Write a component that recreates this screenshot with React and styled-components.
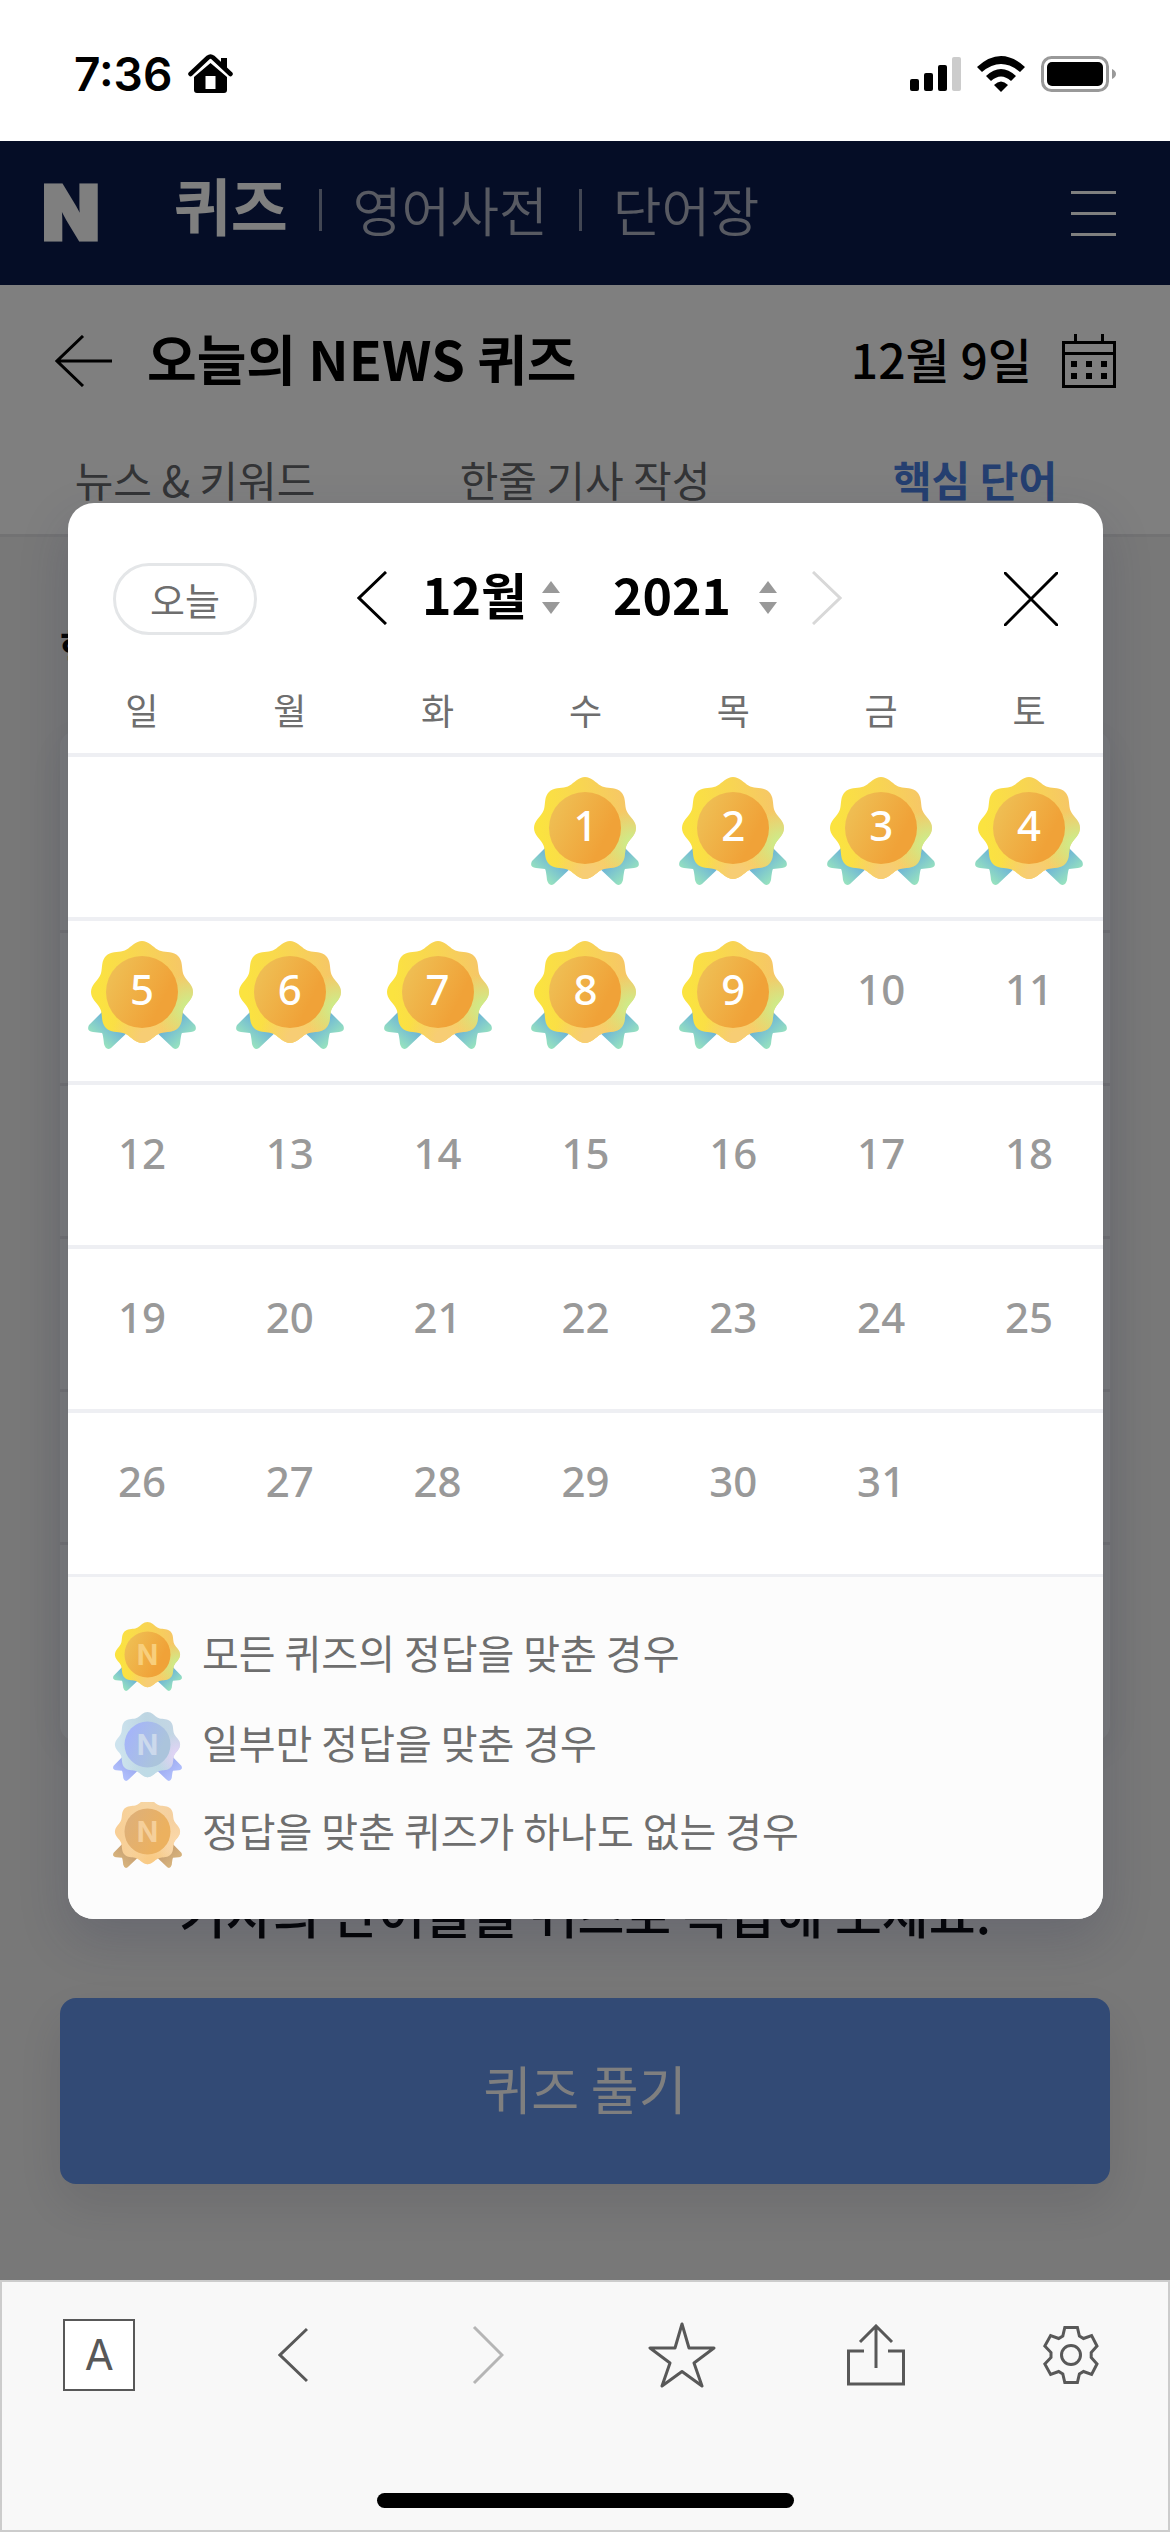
import styled, { createGlobalStyle } from 'styled-components';

const WEEKDAYS = ['일', '월', '화', '수', '목', '금', '토'];

const WEEKS = [
	[null, null, null, 1, 2, 3, 4],
	[5, 6, 7, 8, 9, 10, 11],
	[12, 13, 14, 15, 16, 17, 18],
	[19, 20, 21, 22, 23, 24, 25],
	[26, 27, 28, 29, 30, 31, null],
];

const LAST_SOLVED = 9;

const LEGEND = [
	{ kind: 'gold', text: '모든 퀴즈의 정답을 맞춘 경우' },
	{ kind: 'silver', text: '일부만 정답을 맞춘 경우' },
	{ kind: 'bronze', text: '정답을 맞춘 퀴즈가 하나도 없는 경우' },
];

const BADGES = {
	gold: {
		petal: ['#fbe340', '#f8d552', '#f6c766'],
		glow: '#cbee8c',
		foot: '#f7cd74',
		disc: ['#efbd52', '#f0a238'],
		ribbon: ['#6fb6d6', '#a0ecba'],
		letter: '#f8cf7c',
	},
	silver: {
		petal: ['#cde3ee', '#bdd5e2', '#c3d6e4'],
		glow: '#e2d3f6',
		foot: '#bfdbe6',
		disc: ['#a5b5f8', '#abc4dc'],
		ribbon: ['#a0aef2', '#b6c4ff'],
		letter: '#ccd9ec',
	},
	bronze: {
		petal: ['#f8cf96', '#f6d5a2', '#f5d0a0'],
		glow: '#fbd8a8',
		foot: '#f9cb86',
		disc: ['#dfb077', '#ecb15f'],
		ribbon: ['#c9a273', '#dbb880'],
		letter: '#f5cf9a',
	},
};

// eight soft lobes around the disc
const petalPath = () => {
	const points = [];
	for (let i = 0; i < 144; i++) {
		const a = (i / 144) * Math.PI * 2;
		const r = 48 + 3 * Math.cos(8 * a);
		points.push(`${(54 + r * Math.sin(a)).toFixed(2)} ${(51 - r * Math.cos(a)).toFixed(2)}`);
	}
	return `M${points.join('L')}Z`;
};

const PETALS = petalPath();
const RIBBON = 'M14 71L1 84Q-2 90 5 91L14 92Q15 93 16 103Q18 110 23 107L42 89Z';

const BadgeDefs = () => (
	<Defs aria-hidden='true'>
		<defs>
			{Object.entries(BADGES).map(([kind, c]) => (
				<g key={kind}>
					<linearGradient id={`${kind}-petal`} x1='0' y1='0.4' x2='1' y2='0.3'>
						<stop offset='0.05' stopColor={c.petal[0]} />
						<stop offset='0.5' stopColor={c.petal[1]} />
						<stop offset='0.9' stopColor={c.petal[2]} />
					</linearGradient>
					<radialGradient id={`${kind}-glow`} cx='0.97' cy='0.66' r='0.34'>
						<stop offset='0.1' stopColor={c.glow} />
						<stop offset='1' stopColor={c.glow} stopOpacity='0' />
					</radialGradient>
					<radialGradient id={`${kind}-foot`} cx='0.55' cy='0.95' r='0.35'>
						<stop offset='0.2' stopColor={c.foot} />
						<stop offset='1' stopColor={c.foot} stopOpacity='0' />
					</radialGradient>
					<linearGradient id={`${kind}-disc`} x1='0' y1='0.2' x2='1' y2='0.7'>
						<stop offset='0.1' stopColor={c.disc[0]} />
						<stop offset='0.8' stopColor={c.disc[1]} />
					</linearGradient>
					<linearGradient id={`${kind}-ribbon`} x1='0.8' y1='0.3' x2='0.2' y2='0.9'>
						<stop offset='0.2' stopColor={c.ribbon[0]} />
						<stop offset='1' stopColor={c.ribbon[1]} />
					</linearGradient>
				</g>
			))}
		</defs>
	</Defs>
);

const Badge = ({ kind, letter, size, cut = 0 }) => (
	<svg
		width={size}
		height={size - cut}
		viewBox={`0 ${(cut * 108) / size} 108 ${108 - (cut * 108) / size}`}
		aria-hidden='true'>
		<path d={RIBBON} fill={`url(#${kind}-ribbon)`} />
		<path d={RIBBON} fill={`url(#${kind}-ribbon)`} transform='matrix(-1 0 0 1 108 0)' />
		<path d={PETALS} fill={`url(#${kind}-petal)`} />
		<path d={PETALS} fill={`url(#${kind}-foot)`} />
		<path d={PETALS} fill={`url(#${kind}-glow)`} />
		<circle cx='54' cy='51' r='36' fill={`url(#${kind}-disc)`} />
		{letter && (
			<text
				x='54'
				y='67'
				textAnchor='middle'
				fontFamily='Inter, sans-serif'
				fontWeight='700'
				fontSize='44'
				fill={BADGES[kind].letter}>
				N
			</text>
		)}
	</svg>
);

const Sorter = () => (
	<svg width='18' height='34' viewBox='0 0 18 34' fill='#999' aria-hidden='true'>
		<path d='M9 0L18 12H0Z' />
		<path d='M0 21H18L9 33Z' />
	</svg>
);

const StatusIcons = () => (
	<>
		<svg width='51' height='36' viewBox='0 0 51 36'>
			<rect x='0' y='23' width='9' height='12' rx='2' />
			<rect x='14' y='17' width='9' height='18' rx='2' />
			<rect x='28' y='9' width='9' height='26' rx='2' />
			<rect x='42' y='1' width='9' height='34' rx='2' fill='#ccc' />
		</svg>
		<svg width='48' height='36' viewBox='0 0 48 36'>
			<path d='M0 11Q24 -11 48 11L43 16Q24 0 5 16Z' />
			<path d='M9 20Q24 6 39 20L34 25Q24 16 14 25Z' />
			<path d='M17 29Q24 22 31 29L24 36Z' />
		</svg>
		<svg width='75' height='36' viewBox='0 0 75 36'>
			<rect x='1.5' y='1.5' width='65' height='33' rx='9' fill='none' stroke='#999' strokeWidth='3' />
			<rect x='6' y='6' width='56' height='24' rx='5' />
			<path d='M71 13Q75 15 75 18Q75 21 71 23Z' fill='#999' />
		</svg>
	</>
);

const App = () => {
	return (
		<>
			<GlobalStyle />
			<BadgeDefs />
			<Screen>
				<StatusBar>
					<Clock>7:36</Clock>
					<svg width='45' height='40' viewBox='0 0 45 40' aria-hidden='true'>
						<path
							d='M2.5 20L20 3.5Q22.5 1.5 25 3.5L42.5 20'
							fill='none'
							stroke='#000'
							strokeWidth='4.5'
							strokeLinecap='round'
						/>
						<path d='M33 4H39V17L33 11Z' />
						<path
							fillRule='evenodd'
							d='M22.5 9L39 23V36Q39 39 36 39H9Q6 39 6 36V23ZM17.5 22V35H27.5V22Z'
						/>
					</svg>
					<Spacer />
					<StatusIcons />
				</StatusBar>

				<Page>
					<TopBar>
						<Logo href='#home'>N</Logo>
						<ServiceNav>
							<ServiceLink href='#quiz' $active>
								퀴즈
							</ServiceLink>
							<Divider />
							<ServiceLink href='#dict'>영어사전</ServiceLink>
							<Divider />
							<ServiceLink href='#words'>단어장</ServiceLink>
						</ServiceNav>
						<IconButton aria-label='메뉴'>
							<svg width='45' height='45' viewBox='0 0 45 45' fill='#fff'>
								<path d='M0 0H45V3H0ZM0 21H45V24H0ZM0 42H45V45H0Z' />
							</svg>
						</IconButton>
					</TopBar>

					<TitleBar>
						<IconButton aria-label='뒤로'>
							<svg width='57' height='52' viewBox='0 0 57 52' fill='none' stroke='#000' strokeWidth='3'>
								<path d='M28 1L2 26L28 51M2 26H57' />
							</svg>
						</IconButton>
						<Title>오늘의 NEWS 퀴즈</Title>
						<DateText>12월 9일</DateText>
						<IconButton aria-label='달력'>
							<svg width='54' height='54' viewBox='0 0 54 54'>
								<path
									d='M1.5 8.5H52.5V52.5H1.5ZM0 19.5H54M13.5 0V8M40.5 0V8'
									fill='none'
									stroke='#000'
									strokeWidth='3'
								/>
								<path d='M9 27h6v6h-6zM24 27h6v6h-6zM39 27h6v6h-6zM9 39h6v6h-6zM24 39h6v6h-6zM39 39h6v6h-6z' />
							</svg>
						</IconButton>
					</TitleBar>

					<Tabs>
						<Tab href='#news'>뉴스 &amp; 키워드</Tab>
						<Tab href='#article'>한줄 기사 작성</Tab>
						<Tab href='#keyword' $active>
							핵심 단어
						</Tab>
					</Tabs>

					<Content>
						<SectionTitle>핵심</SectionTitle>
						<WordCard>
							<WordRow $height={202} />
							<WordRow $height={153} />
							<WordRow $height={153} />
							<WordRow $height={153} />
							<WordRow $height={153} />
							<WordRow $height={196} $last />
						</WordCard>
						<Guide>기사의 단어들을 퀴즈로 복습해 보세요.</Guide>
						<StartButton>퀴즈 풀기</StartButton>
					</Content>

					<Dimmed>
						<Modal role='dialog' aria-label='날짜 선택'>
							<ModalHeader>
								<TodayButton>오늘</TodayButton>
								<Pickers>
									<IconButton aria-label='이전 달'>
										<svg width='30' height='54' viewBox='0 0 30 54' fill='none' stroke='#000' strokeWidth='3'>
											<path d='M29 1L2 27L29 53' />
										</svg>
									</IconButton>
									<Picker>
										<Select aria-label='월' defaultValue='12' $width={104}>
											<option value='12'>12월</option>
										</Select>
										<Sorter />
									</Picker>
									<Picker>
										<Select aria-label='연도' defaultValue='2021' $width={130}>
											<option value='2021'>2021</option>
										</Select>
										<Sorter />
									</Picker>
									<IconButton aria-label='다음 달' disabled>
										<svg width='30' height='54' viewBox='0 0 30 54' fill='none' stroke='#d8d8d8' strokeWidth='3'>
											<path d='M1 1L28 27L1 53' />
										</svg>
									</IconButton>
								</Pickers>
								<IconButton aria-label='닫기'>
									<svg width='54' height='54' viewBox='0 0 54 54' fill='none' stroke='#000' strokeWidth='3'>
										<path d='M0 0L54 54M54 0L0 54' />
									</svg>
								</IconButton>
							</ModalHeader>

							<Calendar>
								<thead>
									<tr>
										{WEEKDAYS.map((day) => (
											<Weekday key={day} scope='col'>
												{day}
											</Weekday>
										))}
									</tr>
								</thead>
								<tbody>
									{WEEKS.map((week, i) => (
										<tr key={i}>
											{week.map((day, j) => (
												<DayCell key={j} $last={i === WEEKS.length - 1}>
													{day && (
														<Day $solved={day <= LAST_SOLVED} disabled={day > LAST_SOLVED}>
															{day <= LAST_SOLVED && <Badge kind='gold' size={108} />}
															<span>{day}</span>
														</Day>
													)}
												</DayCell>
											))}
										</tr>
									))}
								</tbody>
							</Calendar>

							<Legend>
								{LEGEND.map(({ kind, text }) => (
									<LegendItem key={kind}>
										<Badge kind={kind} size={69} cut={kind === 'bronze' ? 3 : 0} letter />
										<LegendText>{text}</LegendText>
									</LegendItem>
								))}
							</Legend>
						</Modal>
					</Dimmed>
				</Page>

				<BottomBar>
					<Tools>
						<IconButton aria-label='번역'>
							<LetterBox>A</LetterBox>
						</IconButton>
						<IconButton aria-label='이전 페이지'>
							<svg width='30' height='56' viewBox='0 0 30 56' fill='none' stroke='#585858' strokeWidth='3'>
								<path d='M29 2L2 28L29 54' />
							</svg>
						</IconButton>
						<IconButton aria-label='다음 페이지' disabled>
							<svg width='32' height='60' viewBox='0 0 32 60' fill='none' stroke='#b5b5b5' strokeWidth='3'>
								<path d='M2 2L30 30L2 58' />
							</svg>
						</IconButton>
						<IconButton aria-label='즐겨찾기'>
							<svg
								width='68'
								height='66'
								viewBox='0 0 68 66'
								fill='none'
								stroke='#585858'
								strokeWidth='3'
								strokeLinejoin='round'>
								<path d='M34 2L41 26H66L46 41L54 64L34 49.5L14 64L22 41L2 26H27Z' />
							</svg>
						</IconButton>
						<IconButton aria-label='공유'>
							<svg width='58' height='62' viewBox='0 0 58 62' fill='none' stroke='#585858' strokeWidth='3'>
								<path d='M17 27H1.5V60H56.5V27H41M29 44V2M13 18L29 2L45 18' />
							</svg>
						</IconButton>
						<IconButton aria-label='설정'>
							<svg width='56' height='58' viewBox='0 0 56 58' fill='none' stroke='#585858' strokeWidth='3'>
								<path d='M21.8 1.5H34.4L36.4 10L40.5 12.5L48.6 9.5L54 20L48.2 26.5V31.5L54 38L48.6 48.5L40.5 45.5L36.4 48L34.4 56.5H21.8L19.8 48L15.7 45.5L7.6 48.5L1.8 38L8 31.5V26.5L1.8 20L7.6 9.5L15.7 12.5L19.8 10Z' />
								<circle cx='28' cy='29' r='9.5' />
							</svg>
						</IconButton>
					</Tools>
					<HomeIndicator />
				</BottomBar>
			</Screen>
		</>
	);
};

export default App;

const GlobalStyle = createGlobalStyle`
	* {
		box-sizing: border-box;
	}

	body {
		margin: 0;
		background: #fff;
		font-family: 'Noto Sans CJK KR', sans-serif;
		color: #000;
	}

	svg {
		display: block;
		flex-shrink: 0;
	}

	button, select {
		font-family: inherit;
		padding: 0;
		border: 0;
		background: none;
		color: inherit;
	}

	a {
		color: inherit;
		text-decoration: none;
	}
`;

const Defs = styled.svg`
	position: absolute;
	width: 0;
	height: 0;
`;

const Screen = styled.div`
	display: flex;
	flex-direction: column;
	min-height: 100vh;
`;

const StatusBar = styled.div`
	display: flex;
	align-items: center;
	gap: 16px;
	height: 141px;
	padding: 7px 54px 0 74px;
`;

const Clock = styled.span`
	font-family: Inter, sans-serif;
	font-size: 46px;
	font-weight: 600;
`;

const Spacer = styled.div`
	flex: 1;
`;

const Page = styled.main`
	position: relative;
	flex: 1;
	background: #f1f1f1;
`;

const IconButton = styled.button`
	display: flex;
	align-items: center;
	justify-content: center;
`;

const TopBar = styled.header`
	display: flex;
	align-items: center;
	height: 144px;
	padding: 0 54px 0 42px;
	background: #0a1a4c;
`;

const Logo = styled.a`
	font-family: Inter, sans-serif;
	font-size: 75px;
	font-weight: 900;
	line-height: 144px;
	color: #fff;
	-webkit-text-stroke: 3px #fff;
`;

const ServiceNav = styled.nav`
	display: flex;
	align-items: center;
	flex: 1;
	padding: 0 0 6px 74px;
`;

const ServiceLink = styled.a`
	padding-bottom: ${({ $active }) => ($active ? '12px' : '2px')};
	font-size: ${({ $active }) => ($active ? '62px' : '53px')};
	font-weight: ${({ $active }) => ($active ? 700 : 350)};
	line-height: 90px;
	color: ${({ $active }) => ($active ? '#fff' : 'rgba(255, 255, 255, 0.68)')};
`;

const Divider = styled.span`
	width: 3px;
	height: 42px;
	margin: 0 31px;
	background: rgba(255, 255, 255, 0.5);
`;

const TitleBar = styled.div`
	display: flex;
	align-items: center;
	height: 152px;
	padding: 0 54px 0 55px;
	background: #fff;
`;

const Title = styled.h1`
	flex: 1;
	margin: 0;
	padding: 0 0 6px 35px;
	font-size: 54px;
	font-weight: 700;
	line-height: 60px;
`;

const DateText = styled.span`
	padding: 0 30px 6px 0;
	font-size: 48px;
	font-weight: 500;
	line-height: 60px;
`;

const Tabs = styled.nav`
	display: flex;
	height: 100px;
	border-bottom: 3px solid #e4e4e6;
	background: #fff;
`;

const Tab = styled.a`
	flex: 1;
	text-align: center;
	font-size: 42px;
	font-weight: ${({ $active }) => ($active ? 700 : 400)};
	line-height: 84px;
	color: ${({ $active }) => ($active ? '#4a7ee0' : '#66686c')};
`;

const Content = styled.section`
	padding: 80px 60px 0;
`;

const SectionTitle = styled.h2`
	margin: 0;
	font-size: 42px;
	font-weight: 700;
	line-height: 60px;
`;

const WordCard = styled.div`
	margin-top: 54px;
	border-radius: 16px;
	background: #f5f6f8;
	box-shadow: 0 10px 40px rgba(40, 45, 80, 0.08);
`;

const WordRow = styled.div`
	height: ${({ $height }) => $height}px;
	border-bottom: ${({ $last }) => ($last ? '0' : '3px solid #e2e3e6')};
`;

const Guide = styled.p`
	margin: 135px 0 50px;
	text-align: center;
	font-size: 51px;
	font-weight: 500;
	line-height: 72px;
`;

const StartButton = styled.button`
	width: 100%;
	height: 186px;
	padding-bottom: 8px;
	border-radius: 16px;
	background: #6494ea;
	box-shadow: 0 20px 50px rgba(40, 45, 80, 0.12);
	font-size: 52px;
	color: #fff;
`;

const Dimmed = styled.div`
	position: absolute;
	inset: 0;
	padding: 362px 67px 0 68px;
	background: rgba(0, 0, 0, 0.5);
`;

const Modal = styled.div`
	overflow: hidden;
	border-radius: 26px;
	background: #fff;
	box-shadow: 0 20px 50px rgba(40, 45, 80, 0.2);
`;

const ModalHeader = styled.div`
	display: flex;
	align-items: center;
	height: 162px;
	padding: 60px 45px 30px;
`;

const TodayButton = styled.button`
	width: 144px;
	height: 72px;
	border: 3px solid #e4e6e8;
	border-radius: 36px;
	font-size: 38px;
	line-height: 60px;
	color: #6e6e6e;
`;

const Pickers = styled.div`
	display: flex;
	align-items: center;
	gap: 35px;
	flex: 1;
	padding: 0 0 2px 100px;
`;

const Picker = styled.div`
	display: flex;
	align-items: center;
	gap: 16px;

	& + & {
		margin-left: 18px;
	}
`;

const Select = styled.select`
	appearance: none;
	width: ${({ $width }) => $width}px;
	padding-bottom: 10px;
	font-size: 50px;
	font-weight: 700;
	line-height: 64px;
`;

const Calendar = styled.table`
	width: 100%;
	table-layout: fixed;
	border-spacing: 0;
`;

const Weekday = styled.th`
	height: 92px;
	padding: 0;
	border-bottom: 4px solid #eeeff3;
	font-size: 36px;
	font-weight: 400;
	color: #6e6e6e;
`;

const DayCell = styled.td`
	height: 164px;
	padding: 0;
	vertical-align: top;
	border-bottom: ${({ $last }) => ($last ? '3px' : '4px')} solid #eeeff3;
`;

const Day = styled.button`
	display: grid;
	width: 100%;
	height: 160px;
	justify-items: center;
	align-items: start;
	font-family: 'Noto Sans', sans-serif;
	font-size: 42px;
	font-weight: 500;
	line-height: 136px;
	color: ${({ $solved }) => ($solved ? '#fff' : '#999')};

	svg, span {
		grid-area: 1 / 1;
	}

	svg {
		margin-top: 20px;
	}
`;

const Legend = styled.ul`
	display: flex;
	flex-direction: column;
	gap: 21px;
	margin: 0;
	padding: 45px 45px 51px;
	list-style: none;
	background: #fcfcfc;
`;

const LegendItem = styled.li`
	display: flex;
	align-items: center;
	gap: 20px;
	font-size: 40px;
	line-height: 56px;
	color: #6e6e6e;
`;

const LegendText = styled.span`
	padding-bottom: 10px;
`;

const BottomBar = styled.footer`
	display: flex;
	flex-direction: column;
	align-items: center;
	justify-content: space-between;
	height: 252px;
	padding-bottom: 22px;
	border: 2px solid #ccc;
	background: #f8f8f8;
`;

const Tools = styled.div`
	display: grid;
	grid-template-columns: repeat(6, 1fr);
	width: 100%;
	height: 146px;
`;

const LetterBox = styled.span`
	width: 72px;
	height: 72px;
	border: 2px solid #585858;
	background: #fff;
	font-family: Inter, sans-serif;
	font-size: 42px;
	line-height: 68px;
	color: #585858;
`;

const HomeIndicator = styled.div`
	width: 417px;
	height: 15px;
	border-radius: 8px;
	background: #000;
`;
